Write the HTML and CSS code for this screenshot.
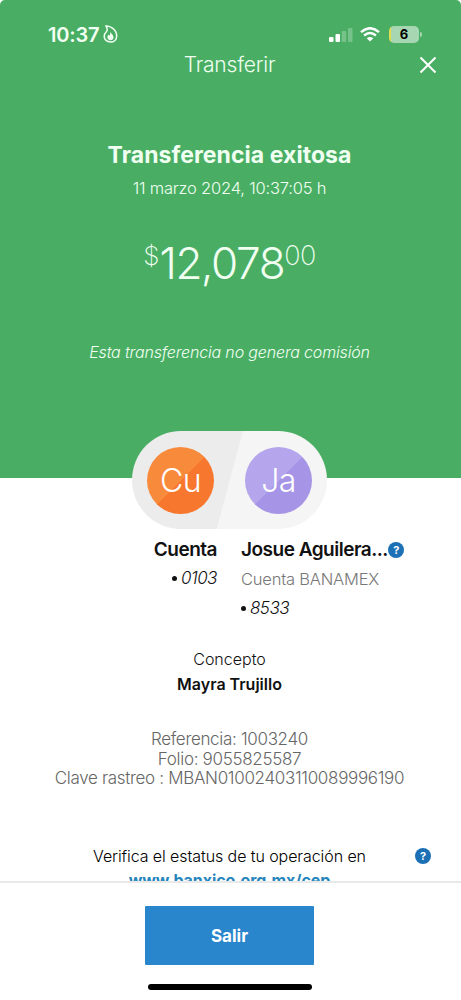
FILE: index.html
```html
<!DOCTYPE html>
<html lang="es">
<head>
<meta charset="utf-8">
<meta name="viewport" content="width=device-width, initial-scale=1">
<title>Transferir</title>
<link rel="stylesheet" href="styles.css">
</head>
<body>
<div class="screen">
  <header class="hero">
    <div class="status">
      <span class="clock">10:37</span>
      <svg class="flame" width="15" height="18" viewBox="0 0 15 18"><path d="M3 1C7 .6 13.700 4.500 13.700 11c0 3.600-2.600 6-6.200 6S1.200 14.600 1.200 11.500c0-2 .8-3.400 2.100-4.700C4.400 5.500 4.300 3 3 1Z" fill="none" stroke="#f0fff1" stroke-width="1.500"/><path d="M7.300 6.500c.4 2 3.200 3.300 3.200 5.700 0 1.800-1.200 3-3 3s-3.100-1.200-3.100-2.900c0-1.200.5-2 1.200-2.700.1.700.4 1 .9 1.200.6-1.200.9-2.500.8-4.300Z" fill="#f0fff1"/></svg>
      <svg class="signal" width="24" height="16" viewBox="0 0 24 16"><g fill="#fff"><rect y="10" width="4.500" height="5" rx="1"/><rect x="6.500" y="7" width="4.500" height="8" rx="1"/><g opacity=".25"><rect x="12.700" y="4" width="4.500" height="11" rx="1"/><rect x="19" y="1" width="4.500" height="14" rx="1"/></g></g></svg>
      <svg class="wifi" width="20" height="15" viewBox="0 0 20 15"><g fill="none" stroke="#fff" stroke-width="2.500"><path d="M1 5.100Q10-2.600 19 5.100"/><path d="M4.100 8.500Q10 3.600 15.900 8.500"/></g><path d="M6.700 11.200Q10 8.600 13.300 11.200L10 14.600Z" fill="#fff"/></svg>
      <span class="battery"><span class="level">6</span></span><span class="nub"></span>
    </div>
    <div class="nav">
      <h1 class="nav-title">Transferir</h1>
      <svg class="close" width="18" height="18" viewBox="0 0 18 18"><path d="M1.500 1.500 16.500 16.500M16.500 1.500 1.500 16.500" stroke="#fff" stroke-width="2" fill="none"/></svg>
    </div>
    <h2 class="title">Transferencia exitosa</h2>
    <p class="date">11 marzo 2024, 10:37:05 h</p>
    <div class="amount"><span class="currency">$</span><span class="whole">12,078</span><span class="cents">00</span></div>
    <p class="note">Esta transferencia no genera comisión</p>
  </header>
  <main class="details">
    <div class="pill">
      <span class="avatar from">Cu</span>
      <span class="avatar to">Ja</span>
    </div>
    <div class="parties">
      <div class="party origin">
        <strong class="name">Cuenta</strong>
        <span class="number"><i class="dot"></i>0103</span>
      </div>
      <div class="party target">
        <strong class="name">Josue Aguilera...<svg class="help" viewBox="0 0 16 16"><circle cx="8" cy="8" r="8" fill="#1c70b5"/><text x="8" y="12" text-anchor="middle" class="mark">?</text></svg></strong>
        <span class="bank">Cuenta BANAMEX</span>
        <span class="number"><i class="dot"></i>8533</span>
      </div>
    </div>
    <p class="label">Concepto</p>
    <p class="concept">Mayra Trujillo</p>
    <div class="refs">
      <p class="ref r1">Referencia: 1003240</p>
      <p class="ref r2">Folio: 9055825587</p>
      <p class="ref r3">Clave rastreo : MBAN01002403110089996190</p>
    </div>
    <div class="verify">
      <span class="verify-text">Verifica el estatus de tu operación en</span>
      <svg class="help" viewBox="0 0 16 16"><circle cx="8" cy="8" r="8" fill="#1c70b5"/><text x="8" y="12" text-anchor="middle" class="mark">?</text></svg>
    </div>
    <a class="link">www.banxico.org.mx/cep</a>
  </main>
  <footer class="footer">
    <button class="exit">Salir</button>
    <div class="home"></div>
  </footer>
</div>
</body>
</html>
```
FILE: styles.css
```css
* { box-sizing: border-box; }
body { margin: 0; background: #fff; font-family: Inter, "Liberation Sans", sans-serif; }
h1, h2, p { margin: 0; font-weight: 300; white-space: nowrap; }
.screen { width: 461px; height: 1000px; display: flex; flex-direction: column; overflow: hidden; }
.hero { height: 478px; flex: none; background: #49ae64; color: #f0fff1; border-radius: 5px 5px 0 0; display: flex; flex-direction: column; align-items: center; padding-right: 2px; }
.status { width: 100%; height: 52px; padding: 17px 0 0 48px; display: flex; align-items: center; flex: none; }
.clock { font-size: 20px; font-weight: 600; letter-spacing: -.2px; width: 55px; }
.flame { margin-top: -1px; }
.signal { margin-left: 211px; }
.wifi { margin-left: 7px; }
.battery { margin-left: 9px; width: 30px; height: 17px; border-radius: 5px; background: linear-gradient(90deg, #e3dc4c 2.500px, #a7d7b2 2.500px); }
.level { display: block; text-align: center; font-size: 13px; line-height: 17px; font-weight: 700; color: #000; }
.nub { width: 2px; height: 5px; margin-left: 1px; border-radius: 0 2px 2px 0; background: #a7d7b2; }
.nav { width: 100%; height: 26px; flex: none; display: grid; grid-template-columns: 1fr auto 1fr; align-items: center; }
.nav-title { grid-column: 2; font-size: 21px; line-height: 26px; letter-spacing: -.2px; }
.close { justify-self: end; margin-right: 22px; }
.title { margin-top: 62px; font-size: 23px; line-height: 30px; font-weight: 700; letter-spacing: .05px; }
.date { margin-top: 7px; font-size: 16.500px; line-height: 22px; letter-spacing: -.2px; }
.amount { margin-top: 38px; height: 52px; display: flex; font-weight: 300; }
.currency { font-size: 26px; line-height: 38px; font-weight: 200; }
.whole { font-size: 44px; line-height: 52px; letter-spacing: -1.350px; }
.cents { font-size: 27px; line-height: 38px; letter-spacing: -.6px; font-weight: 200; }
.note { margin-top: 51px; font-size: 16px; line-height: 24px; font-style: italic; letter-spacing: -.16px; }
.details { height: 403px; flex: none; overflow: visible; display: flex; flex-direction: column; align-items: center; padding-right: 2px; }
.pill { margin-top: -47px; width: 195px; height: 98px; flex: none; border-radius: 49px; display: flex; align-items: center; justify-content: space-between; padding: 0 15px; background: linear-gradient(105deg, #ececec 50%, #f5f5f5 50.300%); }
.avatar { width: 67px; height: 67px; border-radius: 50%; display: grid; place-items: center; color: #fff; font-size: 32px; font-weight: 300; letter-spacing: -.6px; }
.from { background: linear-gradient(135deg, #f88a3c 50%, #f6772d 50.500%); }
.to { background: linear-gradient(135deg, #b5a5ec 50%, #a694e7 50.500%); }
.parties { width: 100%; height: 101px; flex: none; display: grid; grid-template-columns: 217px 1fr; column-gap: 24px; padding-top: 7px; }
.party { display: flex; flex-direction: column; }
.origin { align-items: flex-end; }
.name { display: flex; align-items: center; font-size: 19px; line-height: 28px; font-weight: 600; color: #111; letter-spacing: -.5px; }
.number { display: flex; align-items: center; font-size: 17px; line-height: 28px; font-style: italic; font-weight: 300; color: #111; letter-spacing: -.5px; }
.dot { width: 5px; height: 5px; border-radius: 50%; background: #111; margin-right: 4px; }
.bank { font-size: 16.500px; line-height: 30px; font-weight: 300; color: #777; letter-spacing: -.2px; }
.help { width: 16px; height: 16px; flex: none; }
.mark { font: 700 11px Inter, sans-serif; fill: #fff; }
.label { margin-top: 16px; font-size: 16px; line-height: 26px; color: #111; font-weight: 300; }
.concept { font-size: 16px; line-height: 24px; font-weight: 600; color: #111; }
.refs { margin-top: 34px; text-align: center; color: #666; }
.ref { font-size: 17px; line-height: 19.600px; letter-spacing: -.32px; }
.verify { width: 100%; margin-top: 54px; display: grid; grid-template-columns: 93px 1fr 16px; align-items: center; padding-right: 28px; line-height: 26px; }
.verify-text { grid-column: 2; font-size: 16px; font-weight: 300; letter-spacing: -.08px; color: #000; white-space: nowrap; }
.link { font-size: 16px; line-height: 23px; font-weight: 700; letter-spacing: -.08px; color: #2686bb; }
.footer { flex: 1; position: relative; background: #fff; border-top: 2px solid #e9e9e9; display: flex; flex-direction: column; align-items: center; padding: 23px 2px 0 0; }
.exit { width: 169px; height: 59px; padding: 0; border: 0; border-radius: 1px; background: #2986cc; color: #fff; font: 700 17px Inter, sans-serif; }
.home { width: 164px; height: 6px; margin-top: 19px; border-radius: 3px; background: #000; }
```
